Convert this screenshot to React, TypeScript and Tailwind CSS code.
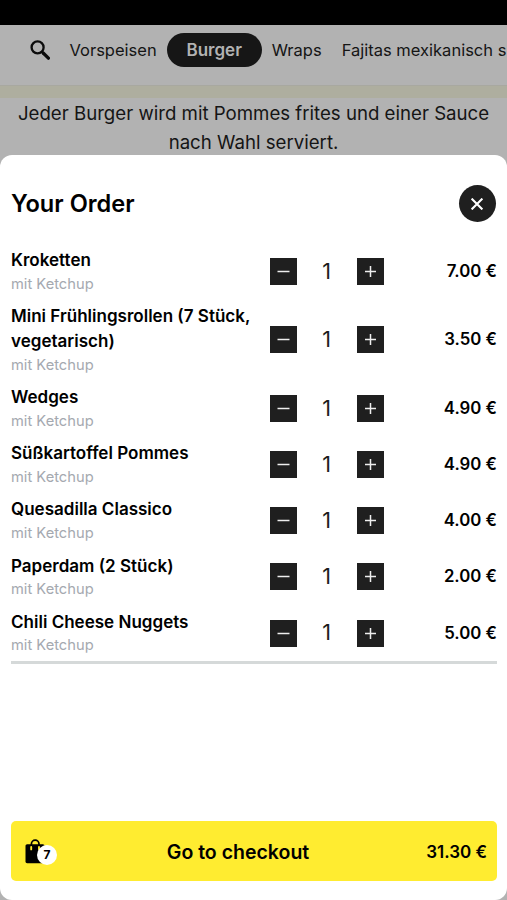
import React from "react";

const categories = ["Vorspeisen", "Burger", "Wraps", "Fajitas mexikanisch s"];

const orderItems = [
  { name: "Kroketten", extra: "mit Ketchup", amount: 1, price: "7.00 €" },
  {
    name: "Mini Frühlingsrollen (7 Stück, vegetarisch)",
    extra: "mit Ketchup",
    amount: 1,
    price: "3.50 €",
  },
  { name: "Wedges", extra: "mit Ketchup", amount: 1, price: "4.90 €" },
  { name: "Süßkartoffel Pommes", extra: "mit Ketchup", amount: 1, price: "4.90 €" },
  { name: "Quesadilla Classico", extra: "mit Ketchup", amount: 1, price: "4.00 €" },
  { name: "Paperdam (2 Stück)", extra: "mit Ketchup", amount: 1, price: "2.00 €" },
  { name: "Chili Cheese Nuggets", extra: "mit Ketchup", amount: 1, price: "5.00 €" },
];

const SearchIcon: React.FC = () => (
  <svg className="h-5 w-5 shrink-0" viewBox="0 0 20 20" fill="none" stroke="#0c0c0c">
    <circle cx="7.6" cy="7.4" r="6" strokeWidth="2.3" />
    <path d="M12 11.8 L13.6 13.4" strokeWidth="2.3" />
    <path d="M13.2 13 L18.4 18.2" strokeWidth="3.2" strokeLinecap="round" />
  </svg>
);

const BagIcon: React.FC = () => (
  <svg className="h-[25px] w-5" viewBox="0 0 20 25">
    <path d="M6.4 7 V5 a3.8 3.8 0 0 1 7.6 0 V7" fill="none" stroke="#000" strokeWidth="1.7" />
    <rect x="0.5" y="5.2" width="19" height="19" rx="1.6" fill="#000" />
    <path d="M6.2 8 v2.4 M14 8 v2.4" stroke="#ffec30" strokeWidth="1.9" strokeLinecap="round" />
  </svg>
);

const Amount: React.FC<{ value: number }> = ({ value }) => (
  <div className="flex w-[114px] items-center justify-between">
    <button className="flex h-[27px] w-[27px] items-center justify-center bg-[#1f1f1f]">
      <svg className="h-[13px] w-[13px]" viewBox="0 0 13 13" stroke="#eee" strokeWidth="1.5">
        <path d="M0.5 6.5 H12.5" />
      </svg>
    </button>
    <span className="text-[21.5px] leading-none text-[#1c1c1c]">{value}</span>
    <button className="flex h-[27px] w-[27px] items-center justify-center bg-[#1f1f1f]">
      <svg className="h-[13px] w-[13px]" viewBox="0 0 13 13" stroke="#eee" strokeWidth="1.5">
        <path d="M1 6.5 H12 M6.5 1 V12" />
      </svg>
    </button>
  </div>
);

const App: React.FC = () => {
  return (
    <div className="flex h-[900px] w-[507px] flex-col overflow-hidden bg-[#b2b2b2] font-['Inter','Liberation_Sans',sans-serif]">
      <div className="h-[25px] shrink-0 bg-black" />

      <nav className="flex h-[61px] shrink-0 items-start border-b border-[#a8a8a0] pt-[7px] pl-[30px] text-[16.5px] text-[#151515]">
        <div className="flex h-[36px] items-center whitespace-nowrap">
          <SearchIcon />
          <span className="ml-[19.5px]">{categories[0]}</span>
          <span className="ml-[10px] flex h-[34px] w-[95px] items-center justify-center rounded-full bg-[#161616] pt-px text-[17px] font-semibold text-[#b2b2b2]">
            {categories[1]}
          </span>
          <span className="ml-[10px]">{categories[2]}</span>
          <span className="ml-5">{categories[3]}</span>
        </div>
      </nav>
      <div className="h-3 shrink-0 bg-[#aeae9f]" />

      <p className="h-[57px] shrink-0 pt-px text-center text-[18.65px] leading-[29px] whitespace-nowrap text-[#151515]">
        Jeder Burger wird mit Pommes frites und einer Sauce
        <br />
        nach Wahl serviert.
      </p>

      <section className="flex flex-1 flex-col rounded-xl bg-white pr-[10px] pl-[11px] pb-[19px] text-black">
        <header className="mt-[30px] flex h-[37px] items-center justify-between">
          <h2 className="text-[23.6px] font-semibold">Your Order</h2>
          <button className="mr-px flex h-[37px] w-[37px] items-center justify-center rounded-full bg-[#1f1f1f] pr-px">
            <svg className="h-3 w-3" viewBox="0 0 12 12" stroke="#fff" strokeWidth="2.1">
              <path d="M0.6 0.6 L11.4 11.4 M11.4 0.6 L0.6 11.4" />
            </svg>
          </button>
        </header>

        <ul className="mt-[21px] border-b-[3px] border-[#d5d9d9]">
          {orderItems.map((item) => (
            <li key={item.name} className="flex items-center pt-[5.2px] pb-[4.4px]">
              <div className="w-[258.6px] shrink-0">
                <h3 className="text-[17.05px] leading-[24.6px] font-semibold">{item.name}</h3>
                <p className="text-[14.7px] leading-[22px] text-[#a5a9b0]">{item.extra}</p>
              </div>
              <Amount value={item.amount} />
              <span className="flex-1 text-right text-[16.8px] font-semibold">{item.price}</span>
            </li>
          ))}
        </ul>

        <button className="mt-auto flex h-[60px] items-center rounded-[5px] bg-[#ffec30] pr-[10px] pl-[14px]">
          <span className="relative w-[84px]">
            <BagIcon />
            <span className="absolute top-[6px] left-[12px] flex h-5 w-5 items-center justify-center rounded-full bg-white text-[12px] font-bold">
              7
            </span>
          </span>
          <span className="flex-1 pt-[3px] pr-[30px] text-center text-[19.5px] font-semibold">
            Go to checkout
          </span>
          <span className="w-[90px] pt-[3px] text-right text-[17px] font-semibold">31.30 €</span>
        </button>
      </section>
    </div>
  );
};

export default App;
